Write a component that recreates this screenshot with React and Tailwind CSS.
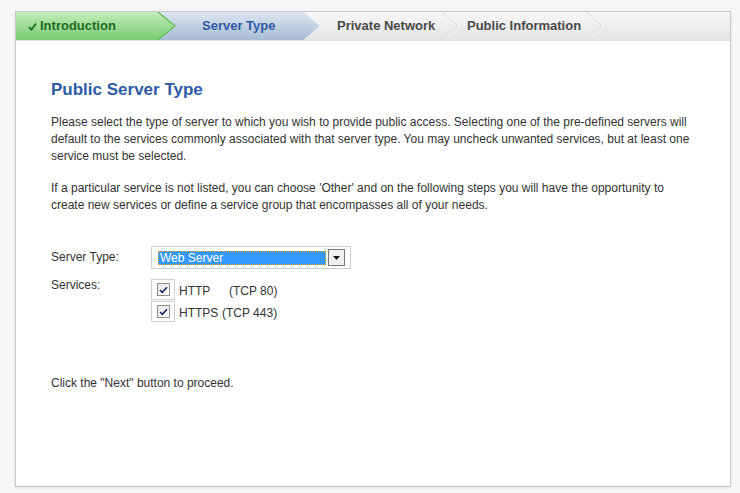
import React from "react";

function TabShapes() {
  return (
    <svg className="absolute inset-0" width="714" height="28" viewBox="0 0 714 28">
      <defs>
        <linearGradient id="bar" x1="0" y1="0" x2="0" y2="1">
          <stop offset="0" stopColor="#f7f7f7" />
          <stop offset="1" stopColor="#e4e4e4" />
        </linearGradient>
        <linearGradient id="green" x1="0" y1="0" x2="0" y2="1">
          <stop offset="0" stopColor="#c4ecbc" />
          <stop offset="1" stopColor="#78cb70" />
        </linearGradient>
        <linearGradient id="blue" x1="0" y1="0" x2="0" y2="1">
          <stop offset="0" stopColor="#dde6f0" />
          <stop offset="1" stopColor="#a6bbd2" />
        </linearGradient>
      </defs>
      <rect x="0" y="0" width="714" height="28" fill="url(#bar)" />
      <polygon points="142,0 288,0 304,14 288,28 142,28" fill="url(#blue)" />
      <polyline points="288,0 304,14 288,28" fill="none" stroke="#e8eef5" strokeWidth="1" />
      <polygon points="0,0 142,0 159,14 142,28 0,28" fill="url(#green)" />
      <polyline points="142,0 159,14 142,28" fill="none" stroke="#5dbf55" strokeWidth="1.2" />
      <polyline points="427,0 442,14 427,28" fill="none" stroke="#d2d2d2" strokeWidth="1" />
      <polyline points="428,0 443,14 428,28" fill="none" stroke="#fafafa" strokeWidth="1" />
      <polyline points="571,0 586,14 571,28" fill="none" stroke="#d2d2d2" strokeWidth="1" />
      <polyline points="572,0 587,14 572,28" fill="none" stroke="#fafafa" strokeWidth="1" />
    </svg>
  );
}

function CheckBox() {
  return (
    <div className="w-[24px] h-[21px] border border-[#cfcfcf] flex items-start pt-[3px] pl-[5px]">
      <div className="w-[13px] h-[13px] border border-[#8f8f8f] bg-gradient-to-br from-[#e6e6e6] to-white flex items-center justify-center">
        <svg width="9" height="8" viewBox="0 0 9 8">
          <path d="M1 4 L3.3 6.4 L8 1.2" fill="none" stroke="#1a2a6c" strokeWidth="1.6" />
        </svg>
      </div>
    </div>
  );
}

export default function App() {
  return (
    <div
      className="min-h-[493px] bg-[#f6f6f6] pt-[11px] pl-[15px]"
      style={{ fontFamily: '"Liberation Sans", Arial, sans-serif' }}
    >
      <div className="w-[716px] h-[476px] border border-[#c9c9c9] bg-white shadow-[0_1px_3px_rgba(0,0,0,0.08)]">
        <div className="relative h-[29px] border-b border-[#dcdcdc]">
          <TabShapes />
          <div className="relative flex items-center h-[28px] text-[13px] font-bold">
            <div className="w-[186px] pl-[12px] flex items-center gap-[3px] text-[#236b1f]">
              <svg width="9" height="9" viewBox="0 0 9 9">
                <path d="M1 5 L3.4 7.6 L8 1.5" fill="none" stroke="#1d7a1d" strokeWidth="2" />
              </svg>
              <span>Introduction</span>
            </div>
            <div className="w-[135px] text-[#2d5aa6]">Server Type</div>
            <div className="w-[130px] text-[#4a4a4a]">Private Network</div>
            <div className="text-[#4a4a4a]">Public Information</div>
          </div>
        </div>

        <div className="pl-[35px] pr-[10px] pt-[39px] text-[12px] leading-[17px] text-[#333]">
          <h1 className="text-[17px] leading-[20px] font-bold text-[#2e5ba7]">Public Server Type</h1>
          <p className="mt-[14px]">
            Please select the type of server to which you wish to provide public access. Selecting one of the pre-defined servers will
            <br />
            default to the services commonly associated with that server type. You may uncheck unwanted services, but at least one
            <br />
            service must be selected.
          </p>
          <p className="mt-[15px]">
            If a particular service is not listed, you can choose 'Other' and on the following steps you will have the opportunity to
            <br />
            create new services or define a service group that encompasses all of your needs.
          </p>

          <div className="mt-[32px] flex items-center">
            <div className="w-[100px]">Server Type:</div>
            <div className="w-[200px] h-[23px] border border-[#cfcfcf] flex items-center pl-[6px] pr-[5px] gap-[2px]">
              <div className="w-[170px] h-[14px] bg-[#3399ff] border border-dotted border-[#f0a030] text-white text-[12px] leading-[12px] pl-[1px]">
                Web Server
              </div>
              <div className="w-[17px] h-[17px] border border-[#777] bg-[#f0f0f0] flex items-center justify-center">
                <svg width="7" height="4" viewBox="0 0 7 4">
                  <polygon points="0,0 7,0 3.5,4" fill="#111" />
                </svg>
              </div>
            </div>
          </div>

          <div className="mt-[8px] flex items-start">
            <div className="w-[100px]">Services:</div>
            <div className="mt-[2px] flex flex-col gap-[1px]">
              <div className="flex items-center">
                <CheckBox />
                <span className="ml-[4px] pt-[3px] w-[50px]">HTTP</span>
                <span className="pt-[3px]">(TCP 80)</span>
              </div>
              <div className="flex items-center">
                <CheckBox />
                <span className="ml-[4px] pt-[3px] w-[43px]">HTTPS</span>
                <span className="pt-[3px]">(TCP 443)</span>
              </div>
            </div>
          </div>

          <p className="mt-[53px]">Click the "Next" button to proceed.</p>
        </div>
      </div>
    </div>
  );
}
